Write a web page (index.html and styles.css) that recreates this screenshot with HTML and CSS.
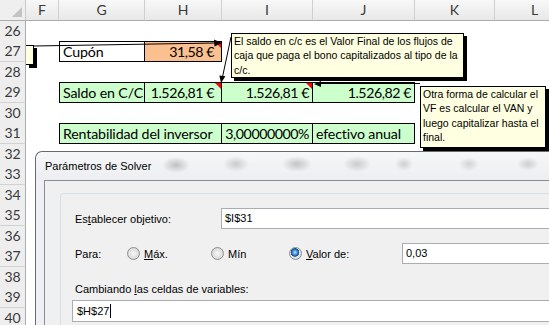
FILE: index.html
```html
<!DOCTYPE html>
<html lang="es">
<head>
<meta charset="utf-8">
<title>Solver</title>
<link rel="stylesheet" href="styles.css">
</head>
<body>
<div class="screen">
  <div class="sheet">
    <div class="row hdr">
      <div class="corner"></div>
      <div class="ch">F</div><div class="ch">G</div><div class="ch">H</div><div class="ch">I</div><div class="ch">J</div><div class="ch">K</div><div class="ch">L</div>
    </div>
    <div class="row"><div class="rh">26</div></div>
    <div class="row"><div class="rh">27</div><div></div>
      <div class="c">Cupón</div><div class="c peach num pr7 cm">31,58 €</div>
    </div>
    <div class="row"><div class="rh">28</div></div>
    <div class="row"><div class="rh">29</div><div></div>
      <div class="c green">Saldo en C/C</div><div class="c green num pr7 cm">1.526,81 €</div><div class="c green num cm">1.526,81 €</div><div class="c green num">1.526,82 €</div>
    </div>
    <div class="row"><div class="rh">30</div></div>
    <div class="row"><div class="rh">31</div><div></div>
      <div class="c green span2">Rentabilidad del inversor</div><div class="c green num">3,00000000%</div><div class="c green">efectivo anual</div>
    </div>
    <div class="row"><div class="rh">32</div></div>
    <div class="row"><div class="rh">33</div></div>
    <div class="row"><div class="rh">34</div></div>
    <div class="row"><div class="rh">35</div></div>
    <div class="row"><div class="rh">36</div></div>
    <div class="row"><div class="rh">37</div></div>
    <div class="row"><div class="rh">38</div></div>
    <div class="row"><div class="rh">39</div></div>
    <div class="row"><div class="rh">40</div></div>
  </div>

  <svg class="arrows" width="549" height="325" viewBox="0 0 549 325">
    <line x1="34" y1="46" x2="216" y2="43" stroke="#000" stroke-width="1"/>
    <polygon points="222,43 214,39.5 214.5,46.5" fill="#000"/>
    <line x1="231" y1="37" x2="222.5" y2="77" stroke="#000" stroke-width="1"/>
    <polygon points="221,83 225.4,76.3 219.4,75.4" fill="#000"/>
    <line x1="420" y1="83.5" x2="320" y2="83.5" stroke="#000" stroke-width="1"/>
    <polygon points="314,84 321,81 321,87" fill="#000"/>
  </svg>

  <div class="note n1"></div>
  <div class="note n2">El saldo en c/c es el Valor Final de los flujos de<br>caja que paga el bono capitalizados al tipo de la<br>c/c.</div>
  <div class="note n3">Otra forma de calcular el<br>VF es calcular el VAN y<br>luego capitalizar hasta el<br>final.</div>

  <div class="dlg">
    <div class="dlg-title">Parámetros de Solver</div>
    <div class="client">
      <div class="group">
        <div class="line r1">
          <span class="lbl w146">Es<u>t</u>ablecer objetivo:</span>
          <div class="tb">$I$31</div>
        </div>
        <div class="line r2">
          <span class="lbl w52">Para:</span>
          <span class="opt o1"><span class="radio"></span><span><u>M</u>áx.</span></span>
          <span class="opt o2"><span class="radio"></span><span>Mín</span></span>
          <span class="opt o3"><span class="radio on"></span><span><u>V</u>alor de:</span></span>
          <div class="tb">0,03</div>
        </div>
        <div class="line r3">
          <span class="lbl">Cambiando <u>l</u>as celdas de variables:</span>
        </div>
        <div class="tb r4">$H$27<span class="caret"></span></div>
      </div>
    </div>
  </div>
</div>
</body>
</html>
```
FILE: styles.css
```css
* { box-sizing: border-box; }
html, body { margin: 0; padding: 0; background: #fff; }
body { width: 549px; height: 325px; overflow: hidden; }
.screen { position: relative; width: 549px; height: 325px; overflow: hidden; }

/* ---------- spreadsheet ---------- */
.sheet { font-family: Lato, "Liberation Sans", sans-serif; font-size: 14.2px; color: #000; }
.row {
  display: grid;
  grid-template-columns: 26px 33px 86px 77px 91px 102px 80px 80px;
  height: 20px;
}
.row:nth-child(odd) { height: 21px; }
.row.hdr { height: 21px; }
.corner {
  position: relative;
  background: #efefef;
  border-right: 1px solid #c9c9c9;
  border-bottom: 1px solid #ababab;
}
.corner::after {
  content: "";
  position: absolute;
  right: 3px;
  bottom: 3px;
  width: 0;
  height: 0;
  border-style: solid;
  border-width: 0 0 10px 10px;
  border-color: transparent transparent #c4c4c4 transparent;
}
.ch {
  background: linear-gradient(#f8f8f8, #e8e8e8);
  border-right: 1px solid #cfcfcf;
  border-bottom: 1px solid #ababab;
  text-align: center;
  line-height: 20px;
  color: #3a3a3a;
  font-size: 14px;
}
.rh {
  background: #eeeeee;
  border-right: 1px solid #ababab;
  border-bottom: 1px solid #d2d2d2;
  text-align: center;
  line-height: 20px;
  color: #3a3a3a;
  font-size: 14px;
}
.c {
  position: relative;
  border: 1px solid #000;
  padding: 0 3px;
  line-height: 19px;
  letter-spacing: -0.15px;
  white-space: nowrap;
  overflow: hidden;
}
.c + .c { margin-left: -1px; }
.span2 { grid-column: span 2; }
.num { text-align: right; padding-right: 3px; letter-spacing: -0.45px; }
.pr7 { padding-right: 7px; }
.peach { background: #fac090; }
.green { background: #ccffcc; }
.cm::after {
  content: "";
  position: absolute;
  top: 0;
  right: 0;
  width: 0;
  height: 0;
  border-style: solid;
  border-width: 0 6px 6px 0;
  border-color: transparent #ff0000 transparent transparent;
}

/* ---------- comments ---------- */
.arrows { position: absolute; left: 0; top: 0; pointer-events: none; }
.note {
  position: absolute;
  background: #ffffe1;
  border: 1px solid #000;
  box-shadow: 3px 3px 0 #000;
  font-family: "Liberation Sans", Arial, sans-serif;
  font-size: 10.5px;
  line-height: 14.4px;
  color: #000;
  padding: 0 2px;
  white-space: nowrap;
}
.n1 { left: 26px; top: 45px; width: 8px; height: 20px; border-left: none; }
.n2 { left: 231px; top: 33px; width: 233px; height: 45px; }
.n3 { left: 420px; top: 86px; width: 126px; height: 62px; }

/* ---------- dialog ---------- */
.dlg {
  position: absolute;
  left: 35px;
  top: 151px;
  width: 560px;
  height: 190px;
  display: flex;
  flex-direction: column;
  border: 1px solid #6a6a6a;
  border-right: none;
  border-bottom: none;
  border-radius: 7px 0 0 0;
  background: #eef0f3;
  padding-left: 8px;
  font-family: "Liberation Sans", Arial, sans-serif;
  font-size: 11px;
  color: #000;
  overflow: hidden;
}
.dlg-title {
  flex: none;
  height: 28px;
  margin-left: -8px;
  padding-left: 9px;
  padding-bottom: 1px;
  display: flex;
  align-items: center;
  border-radius: 7px 0 0 0;
  background:
    radial-gradient(ellipse 14px 8px at 140px 13px, rgba(60,60,60,.28), transparent),
    radial-gradient(ellipse 13px 8px at 200px 12px, rgba(60,60,60,.22), transparent),
    radial-gradient(ellipse 15px 8px at 261px 12px, rgba(60,60,60,.26), transparent),
    radial-gradient(ellipse 14px 8px at 321px 12px, rgba(60,60,60,.22), transparent),
    radial-gradient(ellipse 9px 7px at 368px 12px, rgba(60,60,60,.2), transparent),
    radial-gradient(ellipse 10px 7px at 433px 12px, rgba(60,60,60,.18), transparent),
    radial-gradient(ellipse 11px 7px at 492px 12px, rgba(60,60,60,.2), transparent),
    linear-gradient(#f6f7f8, #eceef1);
}
.client {
  flex: 1;
  min-height: 0;
  background: #f0f0f0;
  border-top: 1px solid #8a8e94;
  border-left: 1px solid #8a8e94;
  padding: 12px 0 0 15px;
}
.group {
  height: 200px;
  border: 1px solid #d5dfe5;
  border-radius: 3px;
  padding: 14px 0 0 11px;
}
.line { display: flex; align-items: center; }
.r1 { height: 21px; }
.r2 { height: 21px; margin-top: 14px; }
.r3 { height: 16px; margin-top: 17px; }
.lbl { margin-left: 3px; flex: none; white-space: nowrap; }
.w146 { width: 146px; }
.w52 { width: 52px; }
.tb {
  flex: 1;
  height: 21px;
  background: #fff;
  border: 1px solid #abadb3;
  padding-left: 3px;
  line-height: 19px;
  white-space: nowrap;
}
.r4 { margin-top: 3px; height: 22px; line-height: 20px; padding-left: 4px; }
.caret {
  display: inline-block;
  width: 1px;
  height: 14px;
  background: #000;
  vertical-align: -3px;
  margin-left: 1px;
}
.opt { display: flex; align-items: center; gap: 4px; flex: none; }
.o1 { width: 84px; }
.o2 { width: 78px; }
.o3 { width: 113px; }
.radio {
  width: 13px;
  height: 13px;
  border-radius: 50%;
  border: 1px solid #8e8f8f;
  background: radial-gradient(circle at 50% 50%, #f6f6f6 0, #e2e2e2 4px, #d4d4d4 6px);
  flex: none;
}
.radio.on {
  background: radial-gradient(circle at 45% 40%, #b8e4ff 0, #3b8ad8 2.5px, #16498a 4px, #ececec 4.6px, #d8d8d8 6px);
}
```
